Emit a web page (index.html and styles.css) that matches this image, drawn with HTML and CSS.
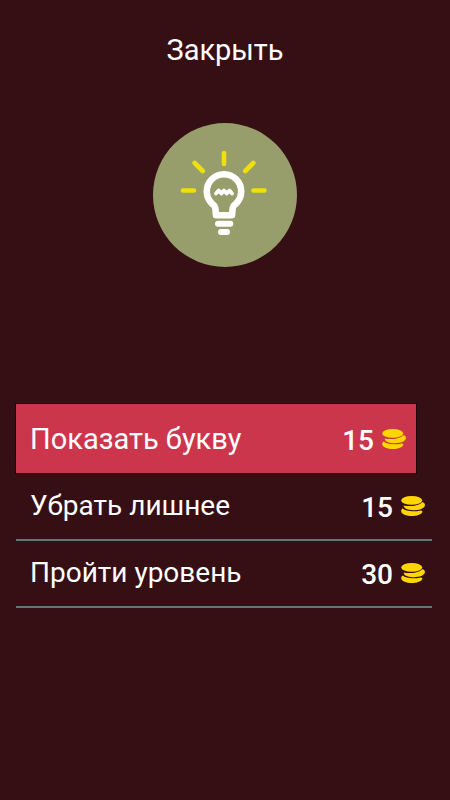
FILE: index.html
```html
<!DOCTYPE html>
<html lang="ru">
<head>
<meta charset="utf-8">
<meta name="viewport" content="width=device-width, initial-scale=1">
<title>Подсказки</title>
<link rel="stylesheet" href="styles.css">
</head>
<body>
<svg class="defs" aria-hidden="true">
  <symbol id="coins" viewBox="0 0 24 20">
    <ellipse cx="10.7" cy="4.400" rx="10.500" ry="4.400"/>
    <path d="M2.600 9.500C8 10.600 17 10.200 20.800 6.400C22.600 6 24.100 7.400 23.900 9.300C23.400 12.500 18.500 14.200 13 14.200C8.500 14.200 3 13.400 2.600 9.500Z"/>
    <path d="M1.800 12.500C4.500 15.500 13 15.900 19.800 14.400C21.200 14.400 21.600 15.200 21.200 16.300C19.800 18.900 15.500 20 11 20C5.500 20 .2 18.500 .2 15C.2 13.900 .8 12.900 1.800 12.500Z"/>
  </symbol>
</svg>
<main class="hints">
  <button class="close" type="button">Закрыть</button>
  <svg class="bulb" viewBox="0 0 144 144" aria-hidden="true">
    <circle class="bulb-disc" cx="72" cy="72" r="72"/>
    <path class="bulb-rays" d="M71 30V41M41.700 40L49.700 48M100.300 40L92.300 48M30 67.500H41M100.500 67.500H111.500"/>
    <path class="bulb-glass" d="M63 92.300L62.300 85C62 82.500 60.500 82 59 80.700A17.200 17.200 0 1 1 83 80.700C81.500 82 80 82.500 79.700 85L79 92.300Z"/>
    <path class="bulb-base" d="M65 100.700H77.300M68 109H74"/>
    <path class="bulb-wire" d="M63 70.500L65.700 67.500L68.400 70.500L71 67.500L73.700 70.500L76.500 67.500L79 70.500"/>
  </svg>
  <div class="list">
    <button class="row selected" type="button">
      <span class="name">Показать букву</span>
      <span class="price">15</span>
      <svg class="coins" aria-hidden="true"><use href="#coins"/></svg>
    </button>
    <button class="row" type="button">
      <span class="name">Убрать лишнее</span>
      <span class="price">15</span>
      <svg class="coins" aria-hidden="true"><use href="#coins"/></svg>
    </button>
    <button class="row" type="button">
      <span class="name">Пройти уровень</span>
      <span class="price">30</span>
      <svg class="coins" aria-hidden="true"><use href="#coins"/></svg>
    </button>
  </div>
</main>
</body>
</html>
```
FILE: styles.css
```css
* {
  box-sizing: border-box;
}

body {
  margin: 0;
  min-height: 100vh;
  background: #360f15;
  color: #fff;
  font-family: Roboto, "Noto Sans", sans-serif;
}

button {
  margin: 0;
  border: 0;
  padding: 0;
  background: none;
  color: inherit;
  font: inherit;
  cursor: pointer;
}

.defs {
  position: absolute;
  width: 0;
  height: 0;
}

.hints {
  display: flex;
  flex-direction: column;
  align-items: center;
  padding: 32px 16px 0;
}

.close {
  font-size: 29px;
  line-height: 36px;
}

.bulb {
  width: 144px;
  height: 144px;
  margin-top: 55px;
}

.bulb-disc {
  fill: #979e6b;
}

.bulb-rays,
.bulb-glass,
.bulb-base,
.bulb-wire {
  fill: none;
  stroke: #fff;
  stroke-width: 6;
  stroke-linecap: round;
  stroke-linejoin: round;
}

.bulb-rays {
  stroke: #f0df0c;
  stroke-width: 4.6;
}

.bulb-glass {
  stroke-width: 6.6;
}

.bulb-wire {
  stroke-width: 3.8;
}

.list {
  align-self: stretch;
  margin: 137px 2px 0 0;
}

.row {
  display: flex;
  align-items: center;
  width: 100%;
  height: 67px;
  padding: 0 7px 2px 14px;
  border-bottom: 2px solid #5f7877;
  font-size: 28px;
  line-height: 36px;
  text-align: left;
}

.selected {
  width: calc(100% - 16px);
  height: 69px;
  margin-bottom: 1px;
  padding: 0 10px 0 14px;
  border-bottom: 0;
  background: #cc364d;
  box-shadow: 0 0 0 1px #1c070b;
  font-size: 29px;
}

.name {
  flex: 1;
}

.price {
  padding-top: 5px;
  margin-right: 8px;
  font-size: 28px;
  font-weight: 500;
}

.coins {
  width: 24px;
  height: 20px;
  fill: #ffd600;
}
```
